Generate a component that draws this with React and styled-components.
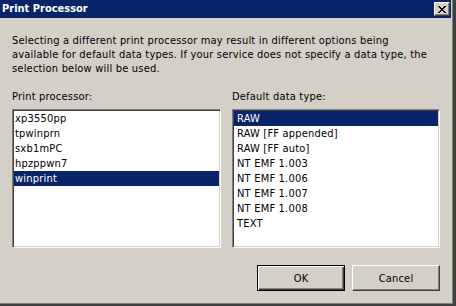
import React from "react";
import styled, { createGlobalStyle } from "styled-components";

const Global = createGlobalStyle`
  html, body { margin: 0; padding: 0; background: #d4d0c8; }
  * { box-sizing: border-box; }
`;

const FONT = `"DejaVu Sans Condensed", "DejaVu Sans", sans-serif`;

const Frame = styled.div`
  width: 456px;
  height: 306px;
  background: #d4d0c8;
  border-right: 3px solid #404040;
  border-bottom: 2px solid #404040;
  box-shadow: inset -1px -1px #808080;
  padding-right: 2px;
  display: flex;
  flex-direction: column;
  font-family: ${FONT};
  font-size: 11px;
  letter-spacing: 0.2px;
  color: #000;
`;

const TitleBar = styled.div`
  height: 18px;
  flex: none;
  background: #0a246a;
  display: flex;
  align-items: center;
  justify-content: space-between;
  padding: 0 1px 0 2px;
`;

const Title = styled.span`
  color: #fff;
  font-weight: bold;
  font-size: 11px;
  letter-spacing: 0;
  line-height: 18px;
  font-family: ${FONT};
`;

const CloseButton = styled.button`
  width: 16px;
  height: 14px;
  margin: 0;
  padding: 0;
  background: #d4d0c8;
  border: 1px solid;
  border-color: #fff #404040 #404040 #fff;
  box-shadow: inset -1px -1px #808080;
  display: flex;
  align-items: center;
  justify-content: center;
`;

const Body = styled.div`
  flex: 1;
  display: flex;
  flex-direction: column;
  padding: 16px 11px 0 12px;
`;

const Intro = styled.p`
  margin: 0;
  line-height: 14px;
  white-space: nowrap;
`;

const Columns = styled.div`
  display: grid;
  grid-template-columns: 209px 208px;
  column-gap: 11px;
  margin-top: 14px;
`;

const Column = styled.div`
  display: flex;
  flex-direction: column;
`;

const Label = styled.div`
  line-height: 14px;
  height: 14px;
`;

const ListBox = styled.ul`
  list-style: none;
  margin: 5px 0 0 0;
  height: 139px;
  background: #fff;
  border: 1px solid;
  border-color: #808080 #fff #fff #808080;
  box-shadow: inset 1px 1px #404040, inset -1px -1px #d4d0c8;
  padding: 1px;
  overflow: hidden;
`;

const Item = styled.li`
  height: 15px;
  line-height: 15px;
  padding-left: ${(p) => p.$indent}px;
  white-space: nowrap;
  background: ${(p) => (p.$selected ? "#0a246a" : "transparent")};
  color: ${(p) => (p.$selected ? "#fff" : "#000")};
`;

const ButtonRow = styled.div`
  display: flex;
  justify-content: flex-end;
  gap: 7px;
  margin-top: 17px;
`;

const Button = styled.button`
  width: 88px;
  height: 26px;
  margin: 0;
  padding: 0;
  font-family: ${FONT};
  font-size: 11px;
  letter-spacing: 0.2px;
  color: #000;
  background: #d4d0c8;
  border: 1px solid;
  border-color: ${(p) => (p.$default ? "#000" : "#fff #404040 #404040 #fff")};
  box-shadow: ${(p) =>
    p.$default
      ? "inset 1px 1px #fff, inset -1px -1px #404040, inset -2px -2px #808080"
      : "inset -1px -1px #808080"};
`;

const processors = ["xp3550pp", "tpwinprn", "sxb1mPC", "hpzppwn7", "winprint"];
const dataTypes = [
  "RAW",
  "RAW [FF appended]",
  "RAW [FF auto]",
  "NT EMF 1.003",
  "NT EMF 1.006",
  "NT EMF 1.007",
  "NT EMF 1.008",
  "TEXT",
];

export default function App() {
  return (
    <>
      <Global />
      <Frame>
        <TitleBar>
          <Title>Print Processor</Title>
          <CloseButton aria-label="Close">
            <svg width="8" height="7" viewBox="0 0 8 7">
              <path
                d="M0 0h2v1h1v1h2v-1h1v-1h2v1h-1v1h-1v1h-1v1h1v1h1v1h1v1h-2v-1h-1v-1h-2v1h-1v1h-2v-1h1v-1h1v-1h1v-1h-1v-1h-1v-1h-1z"
                fill="#000"
              />
            </svg>
          </CloseButton>
        </TitleBar>
        <Body>
          <Intro>
            Selecting a different print processor may result in different options being
            <br />
            available for default data types. If your service does not specify a data type, the
            <br />
            selection below will be used.
          </Intro>
          <Columns>
            <Column>
              <Label>Print processor:</Label>
              <ListBox>
                {processors.map((p) => (
                  <Item key={p} $indent={1} $selected={p === "winprint"}>
                    {p}
                  </Item>
                ))}
              </ListBox>
            </Column>
            <Column>
              <Label>Default data type:</Label>
              <ListBox>
                {dataTypes.map((d) => (
                  <Item key={d} $indent={3} $selected={d === "RAW"}>
                    {d}
                  </Item>
                ))}
              </ListBox>
            </Column>
          </Columns>
          <ButtonRow>
            <Button $default>OK</Button>
            <Button>Cancel</Button>
          </ButtonRow>
        </Body>
      </Frame>
    </>
  );
}
